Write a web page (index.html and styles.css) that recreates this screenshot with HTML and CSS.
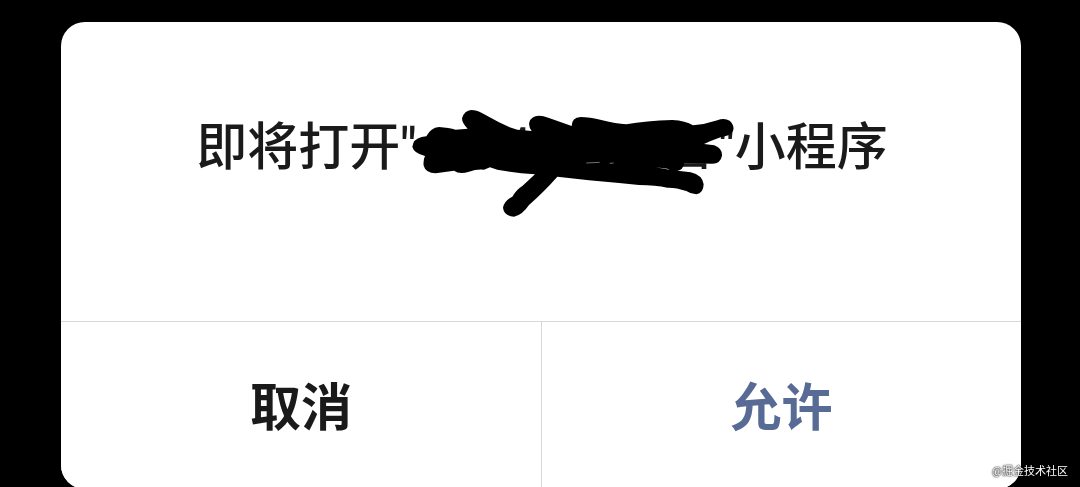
FILE: index.html
```
<!DOCTYPE html>
<html lang="zh-CN">

<head>
	<meta charset="UTF-8">
	<meta name="viewport" content="width=device-width, initial-scale=1.0">
	<title>打开小程序</title>
	<link rel="stylesheet" href="styles.css">
</head>

<body>
	<div class="dialog" role="dialog" aria-labelledby="dialog-title">
		<div class="dialog-body">
			<h1 id="dialog-title" class="dialog-title">
				<span>即将打开"</span>
				<span class="hidden-name">
					<svg class="scribble" viewBox="0 0 1080 390" aria-hidden="true">
						<!-- bits of the name that stick out -->
						<path class="rest" d="M390 110 L395 97 L409 97 L409 110 Z M880 205 H952 V222 H938 V215 H880 Z" />
						<!-- pen outline -->
						<path d="M247 45 Q262 45 280 55 L330 82 L362 97 L385 104 L428 108 Q418 95 421 82 Q427 62 450 62 Q462 62 480 69 L548 93 Q548 68 575 66 Q600 66 640 76 Q680 86 712 88 Q770 77 850 75 Q890 77 912 91 Q950 88 985 76 Q1005 67 1022 77 Q1036 90 1033 105 Q1027 121 1010 123 Q980 130 945 147 L976 151 Q1000 160 999 182 Q995 205 970 206 L886 205 Q882 225 865 228 Q848 229 835 221 L800 217 Q850 228 905 232 Q940 240 944 268 Q943 296 922 298 Q905 297 892 288 Q860 277 835 278 Q800 271 750 270 L690 264 L600 256 L505 245 Q470 285 420 330 Q400 360 375 365 Q345 363 342 338 Q345 318 370 305 Q382 284 400 273 L438 238 Q380 234 325 224 L303 217 L285 224 Q262 222 240 230 Q212 240 195 227 L140 235 Q110 234 104 212 Q102 195 108 183 Q75 175 70 156 Q72 132 98 126 L112 124 Q125 98 150 96 Q180 98 200 104 L236 101 Q219 85 219 70 Q226 46 247 45 Z" />
						<path class="gap" d="M592 204 L632 202 M662 205 L674 204" />
					</svg>
				</span>
				<span>"小程序</span>
			</h1>
		</div>
		<div class="dialog-actions">
			<button type="button" class="btn">取消</button>
			<button type="button" class="btn btn-allow">允许</button>
		</div>
	</div>
	<div class="watermark">@掘金技术社区</div>
</body>

</html>
```
FILE: styles.css
```
* {
	box-sizing: border-box;
}

body {
	margin: 0;
	padding: 22px 59px 0 61px;
	background-color: #000;
	font-family: Roboto, "Noto Sans CJK SC", sans-serif;
	overflow: hidden;
}

.dialog {
	background-color: #fff;
	border-radius: 24px;
	overflow: hidden;
}

.dialog-body {
	padding: 88px 24px 135px 26px;
}

.dialog-title {
	display: flex;
	justify-content: center;
	margin: 0;
	font-size: 51px;
	line-height: 76px;
	font-weight: 500;
	color: #1a1a1a;
	white-space: nowrap;
}

.hidden-name {
	position: relative;
	width: 302px;
}

/* pen marks drawn over the name */
.scribble {
	position: absolute;
	top: -15px;
	left: -28px;
	width: 360px;
	height: 130px;
}

.scribble .rest {
	fill: #1a1a1a;
}

.scribble .gap {
	stroke: #aaa;
	stroke-width: 2px;
}

.dialog-actions {
	display: grid;
	grid-template-columns: 1fr 1fr;
	border-top: 1px solid #d8d8d8;
}

.btn {
	border: none;
	padding: 49px 0 42px;
	background-color: #fff;
	font-family: inherit;
	font-size: 51px;
	line-height: 76px;
	font-weight: bold;
	color: #1a1a1a;
}

.btn-allow {
	border-left: 1px solid #d8d8d8;
	color: #576b95;
}

.watermark {
	position: fixed;
	right: 12px;
	bottom: 7px;
	font-size: 11px;
	line-height: 16px;
	color: #fff;
	text-shadow: 0 0 1px #000, 0 0 2px #000;
}
```
